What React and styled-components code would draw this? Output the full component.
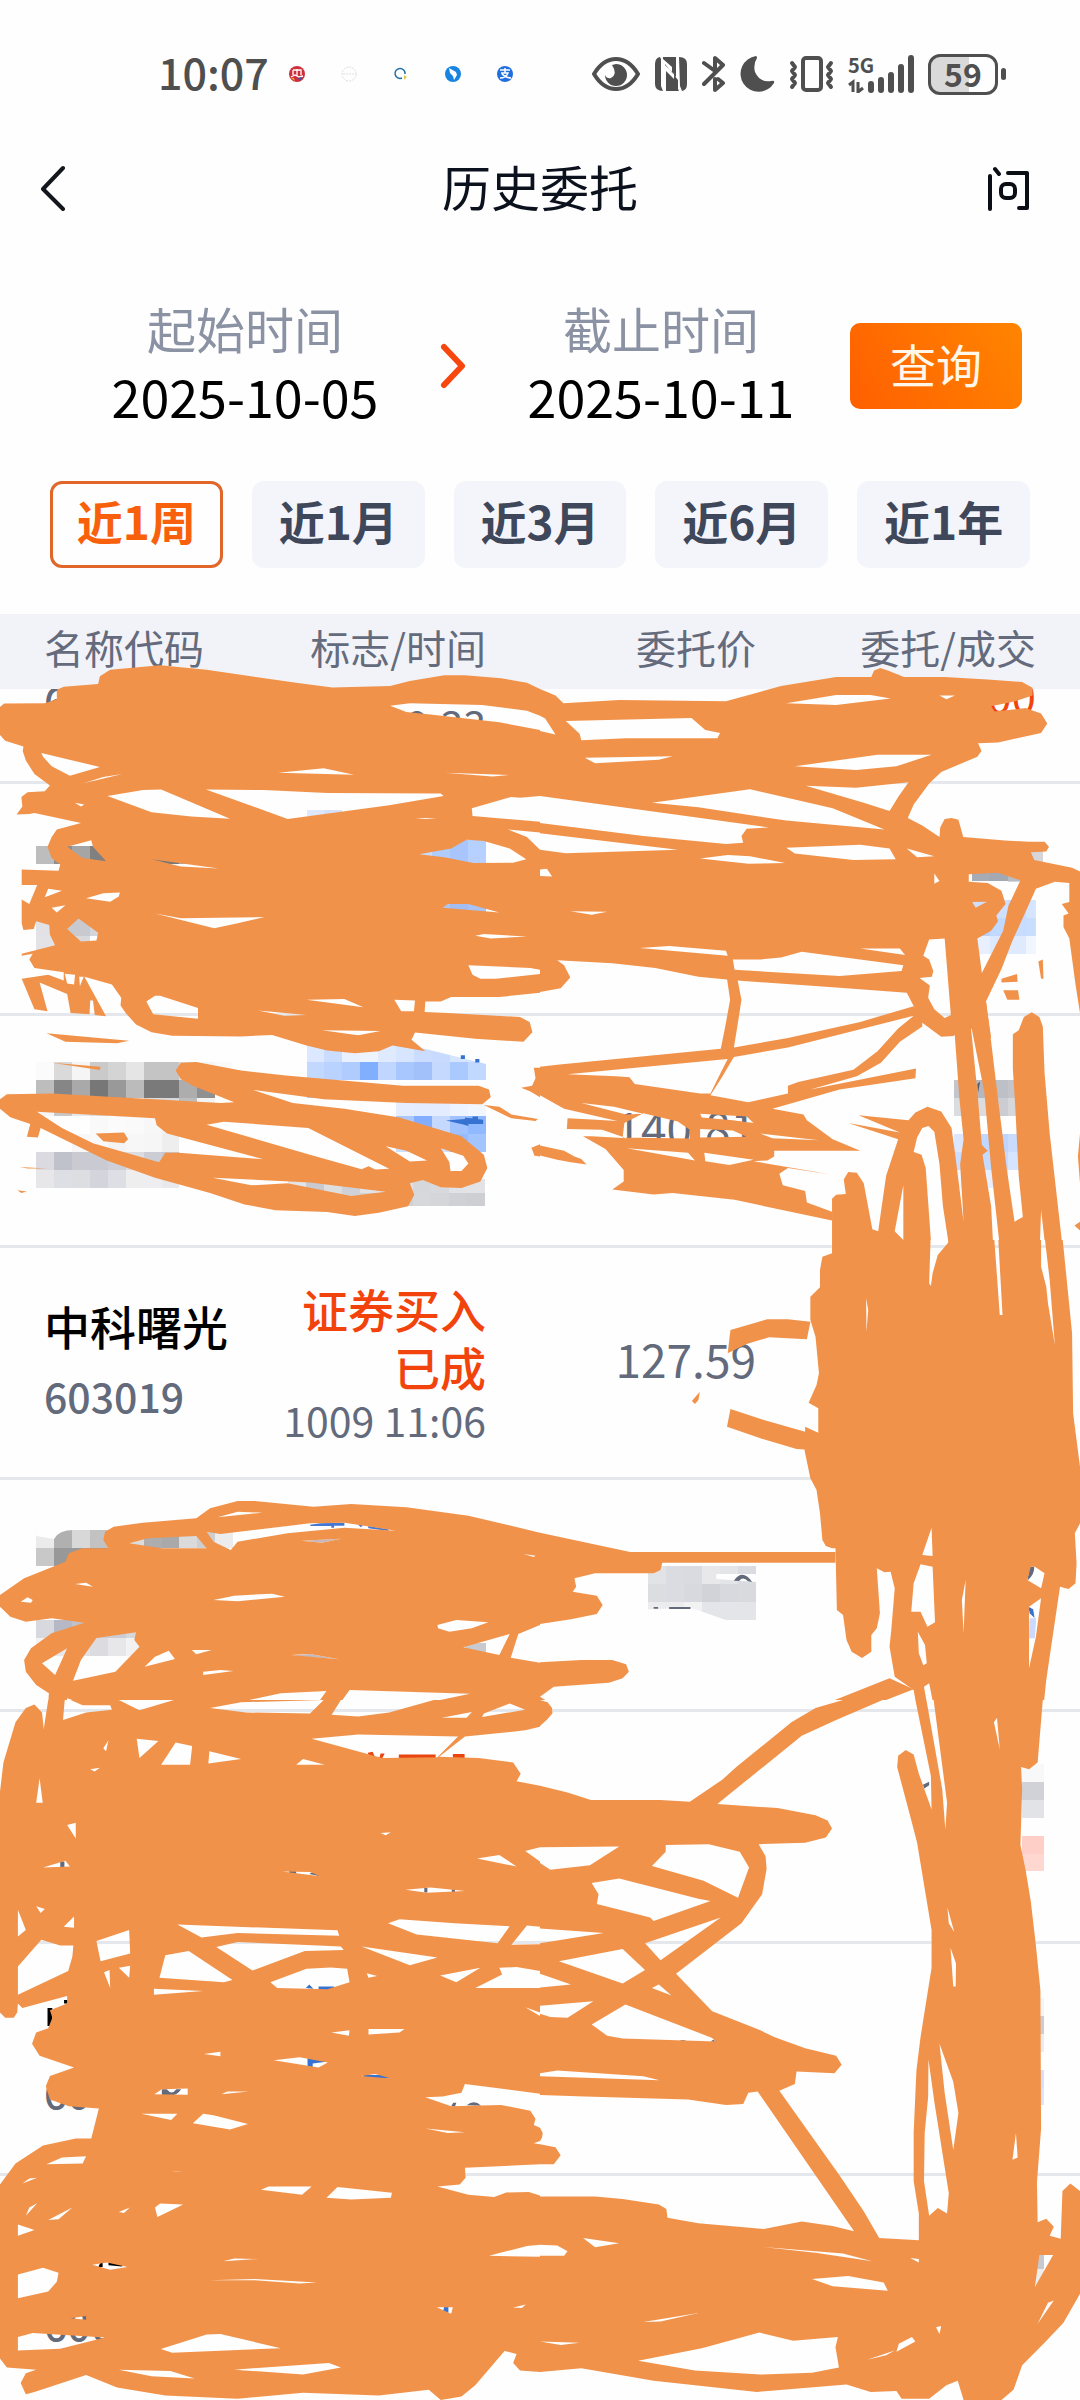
import React from "react";
import styled, { createGlobalStyle } from "styled-components";

const INK = "#f1924a";

const GlobalStyle = createGlobalStyle`
  * { box-sizing: border-box; }
  body {
    margin: 0;
    background: #fefefe;
    font-family: "Noto Sans CJK SC", "Noto Sans", sans-serif;
  }
  button { font-family: inherit; border: 0; padding: 0; background: none; cursor: pointer; }
`;

const Page = styled.main`
  position: relative;
  display: flex;
  flex-direction: column;
  height: 100vh;
  overflow: hidden;
  background: #fefefe;
`;

const StatusBar = styled.div`
  display: flex;
  align-items: center;
  flex: none;
  height: 148px;
  padding: 0 74px 0 158px;
  color: #4f4f4f;
`;

const Clock = styled.time`
  width: 131px;
  font-size: 43px;
  font-weight: 500;
  line-height: 60px;
  padding-bottom: 6px;
`;

const AppDots = styled.div`
  display: flex;
  gap: 36px;
  flex: 1;
`;

const SystemIcons = styled.div`
  display: flex;
  align-items: center;
  gap: 14px;
`;

const Signal = styled.div`
  display: grid;
  position: relative;
  width: 66px;
  height: 38px;
`;

const NetworkLabel = styled.span`
  position: absolute;
  left: 0;
  top: 0;
  font: 700 20px/20px "Noto Sans CJK SC", sans-serif;
`;

const Battery = styled.div`
  display: flex;
  align-items: center;
  gap: 3px;
  &::after {
    content: "";
    width: 5px;
    height: 12px;
    border-radius: 3px;
    background: #4f4f4f;
  }
`;

const BatteryBody = styled.span`
  width: 70px;
  height: 41px;
  border: 3px solid #4f4f4f;
  border-radius: 12px;
  background: linear-gradient(90deg, #d9d9d9 59%, #fefefe 59%);
  text-align: center;
  font-size: 32px;
  font-weight: 700;
  line-height: 32px;
`;

const NavBar = styled.header`
  display: flex;
  align-items: center;
  justify-content: space-between;
  flex: none;
  height: 80px;
  padding: 0 38px;
`;

const Title = styled.h1`
  margin: 0;
  font-size: 49px;
  font-weight: 400;
  line-height: 76px;
  padding-bottom: 4px;
  color: #0b111d;
`;

const IconButton = styled.button`
  display: flex;
  width: 54px;
  height: 46px;
`;

const DateForm = styled.section`
  display: flex;
  align-items: center;
  flex: none;
  padding: 66px 58px 43px 56px;
`;

const DateButton = styled.button`
  display: flex;
  flex: 1;
  flex-direction: column;
  align-items: center;
  padding-bottom: 8px;
`;

const DateLabel = styled.span`
  font-size: 49px;
  line-height: 68px;
  color: #8a92a3;
`;

const DateValue = styled.span`
  font-size: 52px;
  line-height: 68px;
  color: #000;
`;

const QueryButton = styled.button`
  width: 172px;
  height: 86px;
  border-radius: 10px;
  background: linear-gradient(60deg, #ff5f00, #ff8500);
  color: #fff8ea;
  font-size: 46px;
  line-height: 80px;
  padding-bottom: 6px;
`;

const RangeBar = styled.nav`
  display: flex;
  gap: 29px;
  flex: none;
  padding: 0 50px 46px;
`;

const RangeButton = styled.button`
  flex: 1;
  height: 87px;
  padding-bottom: 10px;
  border: 3px solid ${(p) => (p.$active ? "#e0662a" : "#f4f5fa")};
  border-radius: 12px;
  background: ${(p) => (p.$active ? "#fefefe" : "#f4f5fa")};
  color: ${(p) => (p.$active ? "#f9600b" : "#3f475a")};
  font-size: 46px;
  font-weight: 700;
  line-height: 70px;
`;

const OrderTable = styled.table`
  width: 100%;
  table-layout: fixed;
  border-collapse: collapse;
`;

const Head = styled.th`
  width: ${(p) => p.$width};
  height: 75px;
  padding: ${(p) => (p.$edge === "left" ? "0 0 9px 44px" : p.$edge === "right" ? "0 44px 9px 0" : "0 0 9px")};
  background: #f2f3f8;
  color: #646b7d;
  font-size: 40px;
  font-weight: 400;
  line-height: 62px;
  text-align: ${(p) => (p.$edge === "left" ? "left" : "right")};
`;

const Cell = styled.td`
  padding: ${(p) => (p.$edge === "left" ? "0 0 0 44px" : p.$edge === "right" ? "0 44px 0 0" : "0")};
  border-bottom: 3px solid #e4e8ec;
  text-align: ${(p) => (p.$edge === "left" ? "left" : "right")};
`;

const CellWindow = styled.div`
  display: flex;
  flex-direction: column;
  justify-content: flex-end;
  height: ${(p) => (p.$cut ? "92px" : "229px")};
  overflow: hidden;
`;

const CellBody = styled.div`
  display: flex;
  flex: none;
  flex-direction: column;
  justify-content: center;
  height: 229px;
`;

const StockName = styled.span`
  height: 70px;
  font-size: 46px;
  font-weight: 500;
  line-height: 66px;
  color: #000;
`;

const StockCode = styled.span`
  height: 72px;
  font-size: 41px;
  font-weight: 500;
  line-height: 66px;
  color: #626a7c;
`;

const State = styled.span`
  height: 58px;
  font-size: 46px;
  font-weight: 500;
  line-height: 60px;
  color: #f2430c;
`;

const Time = styled.span`
  height: 54px;
  font-size: 41px;
  line-height: 50px;
  color: #626a7c;
`;

const Price = styled.span`
  height: 70px;
  font-size: 46px;
  line-height: 60px;
  color: #626a7c;
`;

const Amount = styled.span`
  height: 112px;
  padding-top: 56px;
  font-size: 44px;
  line-height: 54px;
  color: #f2430c;
`;

const InkLayer = styled.svg`
  position: absolute;
  left: 0;
  top: 0;
  width: 100%;
  height: 2400px;
  pointer-events: none;
`;

/* Each shape is a closed outline; the shapes after the first in a list are gaps in it. */
const outline = (list) => list.map((s) => `M${s}Z`).join("");

const topLeft = [
  "285 115 290 95 320 78 465 66 600 78 860 112 965 124 1133 120 1190 107 1290 92 1350 92 1455 100 1530 112 1568 128 1568 408 1510 412 1485 410 1370 440 1372 460 1568 475 1568 503 1475 495 1530 515 1568 548 1568 862 1540 857 1360 850 1372 875 1395 885 1440 885 1568 873 1568 922 1450 933 1310 933 1280 945 1235 945 1233 972 1300 975 1510 985 1538 998 1546 1025 1520 1050 1380 1042 1205 1026 1195 1045 1235 1075 1140 1060 1100 1075 1030 1080 950 1073 890 1060 790 1032 700 1036 500 1034 440 1025 395 1005 365 975 350 955 352 935 325 900 245 880 308 983 275 980 270 942 262 942 260 978 205 975 195 925 115 895 138 970 100 965 63 885 140 875 185 890 185 868 100 857 85 835 95 820 63 825 63 820 160 798 145 770 143 745 105 735 98 755 68 758 63 740 63 678 85 690 108 640 63 640 63 600 170 603 175 587 150 570 138 540 150 515 165 495 235 478 100 452 85 455 48 456 65 435 62 410 80 398 130 395 145 380 100 350 75 315 66 290 68 278 15 263 0 248 0 175 12 166 130 165 165 155 165 130 185 122",
  "1133 172 1190 165 1400 170 1530 185 1568 198 1568 235 1450 215 1250 195 1180 188",
  "120 295 290 332 203 355 150 330 125 305", "240 375 300 358 355 350",
  "312 408 415 392 468 391 668 467 555 461 440 450",
  "598 391 765 392 950 400 1280 401 1288 408 1130 432 835 468 750 440",
  "808 347 940 335 1028 352", "1292 347 1478 353 1430 357", "217 425 245 430 235 435",
  "195 540 265 523 270 540 308 578 240 570", "440 573 635 597 525 592", "1207 468 1235 465 1268 468",
  "1217 560 1310 545 1355 522 1405 525 1480 545 1528 573 1490 582 1375 583 1290 568",
  "140 650 180 655 130 672", "250 675 300 662 348 660 345 670 320 684", "150 700 190 693 165 712",
  "450 715 525 727 768 724 690 740 622 753", "195 755 228 728 285 765 280 785 235 788",
  "1285 700 1300 690 1360 690 1450 712", "1380 773 1405 768 1530 775 1425 780",
  "188 872 195 898 215 900 218 875", "230 880 243 880 232 905",
  "425 945 450 930 465 930 575 962 575 990 445 978", "750 968 890 980 825 982",
  "890 940 1000 938 1055 960", "1145 940 1205 942 1202 970 1165 970", "935 1020 1105 1022 1040 1033",
];

const loopLeft = [
  "0 1200 20 1187 150 1185 640 1210 680 1208 560 1165 525 1147 510 1125 525 1105 570 1103 700 1125 830 1138 1170 1165 1390 1165 1420 1175 1425 1195 1400 1213 1180 1210 940 1200 735 1176 850 1210 1000 1225 1160 1248 1340 1297 1405 1345 1415 1380 1395 1415 1340 1432 1280 1430 1228 1411 1190 1420 1203 1450 1185 1480 1100 1497 1030 1505 950 1495 800 1490 710 1475 610 1445 450 1405 310 1360 118 1275 110 1300 78 1298 88 1265 30 1247 0 1225",
  "107 1233 450 1250 455 1268 485 1290 765 1357 520 1340 480 1340 462 1365 270 1315 180 1275",
  "600 1267 650 1259 895 1275 1130 1382 1090 1384 1070 1375 1050 1383 900 1345",
  "1120 1323 1180 1335 1240 1360 1190 1363", "1280 1328 1345 1348 1360 1368 1340 1388 1308 1388 1305 1365",
  "617 1405 900 1418 1120 1442 1020 1453 835 1420 730 1425",
];

const bitsLeft = [
  "135 1028 375 1047 340 1054 190 1050", "150 1105 292 1115 290 1124",
  "278 1290 360 1287 372 1305 360 1315 300 1310",
  "1405 1215 1450 1220 1485 1240 1562 1252 1555 1257 1485 1250",
  "1513 1170 1545 1165 1555 1145 1550 1118 1568 1118 1568 1195 1540 1180", "1543 1327 1568 1318 1568 1350 1552 1348",
  "57 1377 137 1381 80 1381", "50 1438 78 1441 62 1445",
];

const topRight = [
  "0 128 45 145 68 165 230 157 540 160 630 138 700 120 860 97 962 97 970 80 988 73 1010 80 1057 97 1175 97 1300 103 1400 110 1430 125 1430 145 1380 160 1310 173 1320 187 1410 178 1455 192 1473 218 1455 243 1330 268 1272 270 1282 290 1270 305 1165 345 1130 375 1085 430 1068 465 1110 485 1160 515 1162 490 1175 468 1195 465 1215 470 1229 515 1350 524 1420 527 1465 527 1478 540 1470 553 1425 555 1435 575 1545 595 1568 605 1568 975 1555 900 1537 780 1520 750 1520 720 1535 715 1515 690 1537 685 1537 635 1495 632 1440 650 1430 670 1395 740 1370 790 1340 860 1295 945 1310 1040 1240 1010 1200 1035 1165 1037 1110 1000 1065 922 860 908 573 890 460 880 335 857 210 845 50 837 70 850 88 882 60 910 0 920",
  "1175 780 1193 980 1175 988 1145 965 1127 935 1132 903 1102 883 1138 880 1142 865 1130 835 1113 825 1130 783",
  "0 198 15 205 45 247 0 238", "75 212 440 204 480 235 523 243 515 257 250 257 120 262 115 245",
  "715 165 860 144 960 144 1018 153 860 170", "1160 145 1205 145 1180 155", "130 308 385 304 345 313 160 322",
  "740 330 980 300 1137 300 1035 330 918 340", "772 381 918 386 1070 372 1040 410 1015 447 940 425",
  "325 425 610 390 850 440 1000 495 715 472 460 437",
  "0 408 450 463 665 490 600 493 585 512 590 530 540 533 300 512 0 478", "0 505 400 548 75 557 0 548",
  "465 571 545 562 610 565 712 583 605 585", "715 543 930 535 1015 545 1033 573 910 575 740 558",
  "1065 545 1145 565 1095 568", "290 805 375 800 540 812 545 825", "560 835 640 835 700 830 760 815 1055 850 1050 865 870 878 565 862",
  "930 806 1045 806 1060 823", "0 600 20 598 35 618 0 617", "88 709 195 710 150 718", "1145 610 1160 630 1145 637",
  "1270 780 1310 760 1330 735 1325 720 1352 690 1340 655 1300 635 1245 632 1245 612 1330 608 1395 628 1360 695 1345 760 1283 870",
  "1255 685 1298 684 1265 700",
];

const sweepRight = [
  "0 1115 50 1110 525 1068 540 1000 552 940 543 885 573 885 585 940 573 1010 563 1065 720 1040 930 998 1085 957 1110 985 1110 1010 1045 1050 990 1105 920 1140 785 1175 1092 1120 1090 1145 870 1175 675 1225 765 1240 775 1255 850 1305 930 1335 680 1335 680 1350 660 1360 620 1362 845 1397 720 1380 695 1395 705 1425 770 1440 775 1470 850 1495 848 1517 565 1463 385 1445 330 1449 210 1436 243 1415 243 1385 190 1330 125 1297 150 1297 252 1302 180 1280 78 1278 80 1250 150 1253 225 1257 70 1225 0 1190",
  "80 1135 545 1095 525 1130 495 1185 465 1185 275 1160 260 1143 220 1140",
  "563 1090 720 1065 1085 982 1040 1015 980 1075 910 1123 750 1155 720 1165 720 1185 605 1208 495 1190 530 1140",
  "252 1328 430 1340 450 1360", "477 1340 620 1358 550 1372 480 1362", "675 1302 810 1307 640 1290",
  "120 1210 215 1220 300 1238 250 1240", "245 1262 300 1237 400 1258 435 1280 435 1303 240 1300", "465 1238 600 1245 620 1262 560 1255 470 1248",
  "465 1278 560 1282 600 1298 465 1300",
];

const barsRight = [
  "1200 980 1295 945 1310 1050 1330 1200 1355 1380 1378 1520 1402 1508 1390 1400 1380 1220 1373 1120 1373 1030 1390 1020 1405 985 1428 973 1450 985 1460 1010 1465 1130 1480 1290 1515 1568 848 1568 848 1460 860 1450 888 1448 882 1410 895 1390 920 1392 940 1420 965 1540 982 1545 1005 1400 1040 1305 895 1262 1045 1287 925 1242 1070 1255 1090 1235 1125 1220 1165 1232 1195 1275 1205 1340 1230 1520 1220 1370 1230 1305 1218 1200",
  "1250 1000 1270 1180 1283 1320 1300 1335 1285 1345 1310 1480 1315 1568 1333 1568 1310 1380 1290 1180",
  "1085 1338 1095 1300 1110 1275 1128 1270 1145 1285 1160 1370 1170 1480 1185 1568 1135 1568 1120 1380 1108 1345",
  "1055 1425 1030 1545 1055 1568", "1455 1490 1452 1568 1465 1568",
];

const bitsRight = [
  "1340 885 1385 873 1387 893 1340 895", "1345 915 1388 915 1392 940 1357 940", "1447 840 1460 835 1462 885 1455 885",
  "1568 1290 1562 1350 1568 1420", "1552 1530 1568 1520 1568 1543",
  "0 1321 70 1335 100 1350 120 1356 135 1371 90 1365 50 1358 0 1347",
];

const midLeft = [
  "300 930 305 905 330 890 415 878 570 865 610 835 690 813 740 813 910 830 1020 822 1180 832 1360 857 1568 908 1568 1185 1505 1212 1483 1283 1568 1298 1568 1500 45 1500 60 1450 75 1430 95 1424 122 1440 126 1500 135 1500 142 1390 105 1365 75 1325 70 1290 90 1255 150 1210 245 1178 150 1165 75 1175 30 1160 0 1130 0 1095 70 1045 190 995 200 970 240 955 315 955",
  "632 862 690 845 762 848", "600 905 640 912 900 880 1000 878 1150 902 1000 893 835 910 690 935 670 960 620 935",
  "375 940 430 925 570 918 600 955 470 955", "60 1115 80 1102 95 1110 90 1118", "218 1062 250 1058 270 1070",
  "620 1110 680 1097 790 1091 827 1100 690 1114", "1270 1185 1325 1170 1418 1177 1370 1195 1305 1205 1272 1195",
  "1345 1252 1480 1212 1450 1275", "280 1224 395 1207 390 1230 405 1250 335 1325 212 1352 235 1290",
  "122 1300 195 1255 160 1335", "420 1310 450 1280 490 1262 508 1287", "557 1260 615 1260 570 1273",
  "590 1325 640 1320 678 1323 590 1335", "845 1275 900 1272 985 1288", "610 1435 815 1390 948 1383 900 1452 710 1450",
  "1015 1380 1365 1391 1150 1438 1050 1458 963 1455", "195 1405 265 1428 320 1425 325 1440 185 1470",
  "375 1420 495 1411 405 1442", "1520 972 1555 977 1550 981", "875 932 990 926 935 938",
];

const midRight = [
  "848 0 848 70 820 80 813 120 813 172 785 200 785 270 800 320 810 430 803 465 780 518 808 535 808 608 770 590 768 660 785 745 803 780 813 850 820 930 830 948 848 955 858 955 862 1140 880 1155 890 1230 905 1265 935 1284 962 1265 962 1215 978 1195 987 1150 978 1015 1000 1027 1018 1025 1030 1075 1020 1200 1015 1250 1030 1340 1085 1380 1105 1500 1455 1500 1470 1350 1510 1070 1535 1077 1555 1060 1558 1000 1553 910 1568 880 1568 710 1548 550 1545 310 1515 0",
  "965 0 1010 0 980 5", "1020 0 1055 0 1055 28", "1135 0 1185 0 1185 38 1155 75 1140 130 1135 168 1130 160", "947 205 953 240 948 305",
  "1318 10 1330 15 1343 255 1335 255", "1455 0 1463 0 1480 150 1495 345 1475 220 1470 170 1455 110",
  "1110 975 1137 893 1140 978", "1140 1010 1105 1003 1085 1060 1078 1145 1105 1145 1125 1190 1147 1177",
  "1097 1205 1118 1245 1123 1300 1113 1306 1100 1270", "1236 1050 1230 1210 1225 1110",
  "1415 1050 1425 1010 1437 1010 1465 1030 1455 1075", "1420 1130 1455 1105 1440 1220 1420 1315",
  "1130 1360 1115 1370 1137 1500 1157 1500",
];

const midStrokes = [
  "0 908 262 966 858 966 858 998 355 998 350 1020 330 1030 160 1030 100 1045 105 1070 95 1085 165 1097 182 1125 165 1152 90 1168 0 1182",
  "0 1297 120 1290 210 1290 250 1303 258 1325 240 1345 200 1358 40 1370 0 1400 22 1414 35 1440 0 1480",
  "553 300 660 268 720 268 785 275 775 328 665 322 600 342 545 370",
  "553 537 650 570 770 605 808 612 800 660 745 657 640 625 543 590",
  "441 513 464 485 460 510 450 522", "705 1500 795 1435 1015 1345 1085 1378 830 1480 795 1500",
];

const lowLeft = [
  "0 205 10 140 45 50 75 18 100 10 122 28 127 65 140 0 188 0 183 45 250 28 325 22 320 12 240 12 205 0 1568 0 1568 60 1525 68 1350 82 1275 127 1390 130 1490 140 1512 165 1500 182 1568 192 1568 330 1525 338 1568 362 1568 508 1530 505 1485 548 1568 547 1568 607 1500 598 1450 600 1458 615 1380 645 1568 645 1568 700 1525 688 1568 708 1568 882 1350 860 1340 880 1285 888 1235 890 1310 910 1455 907 1540 920 1555 938 1550 952 1568 958 1568 988 1550 993 1568 995 1568 1040 1350 1048 1352 1070 1335 1085 1270 1090 1360 1108 1435 1113 1470 1103 1535 1102 1568 1110 1568 1220 1530 1223 1420 1245 1568 1247 1568 1505 1510 1502 1490 1485 1500 1465 1465 1458 1380 1535 1340 1560 1280 1568 1245 1545 1100 1558 880 1552 690 1565 480 1558 340 1540 250 1512 100 1550 75 1555 60 1530 75 1508 105 1500 20 1495 0 1475 0 1085 45 1038 125 998 220 982 265 982 287 915 200 910 145 895 133 865 145 842 215 823 115 797 93 770 105 745 140 735 152 712 145 695 195 680 195 663 65 690 52 680 50 700 40 712 15 712 0 700",
  "115 175 105 230 124 230", "345 0 505 0 405 23", "610 18 700 5 940 0 900 30 715 28", "963 33 990 0 1260 0 1130 28 1040 37",
  "1283 40 1370 27 1355 40", "1405 30 1480 8 1525 22 1400 38", "300 108 315 90 308 115", "262 155 290 152 275 160",
  "397 87 460 92 405 130", "510 95 558 103 552 145 468 145", "608 115 700 132 605 142", "905 87 1040 77 1330 82 1270 128 1110 130",
  "860 145 880 132 943 145", "195 280 220 275 220 310", "125 375 190 360 203 373", "955 306 1005 314", "1105 298 1135 296 1120 303",
  "1385 355 1450 347 1500 373", "820 384 900 385 930 395", "1178 425 1250 420 1350 428 1240 432", "105 462 130 468 118 477",
  "52 470 75 515 52 530", "120 537 175 550 213 550 210 575 198 607 52 660 52 597", "215 485 215 510 185 508",
  "280 540 375 515 378 568 292 585", "515 503 980 516 985 528 690 522 585 532", "1127 500 1160 491 1320 500 1480 507 1445 545 1210 525",
  "480 572 548 562 675 627 650 632 463 622", "628 553 690 542 990 552 998 560 885 562 733 606", "1050 552 1270 577 1190 594",
  "785 632 890 602 960 599 1008 602 1015 632 950 648 805 645", "1278 617 1395 600 1325 632", "447 647 590 652 447 660",
  "302 610 318 605 320 645", "345 600 378 595 375 622", "1065 612 1095 618 1070 622", "962 745 1015 740 1013 752",
  "1070 737 1175 737 1160 745 1070 749", "592 793 640 788 640 798", "795 807 870 800 952 812 925 823", "1048 842 1090 838 1135 848",
  "448 883 470 872 545 870 545 884", "643 883 660 877 722 877", "410 927 515 927 497 941", "560 948 590 927 620 930 720 950 668 962",
  "1235 960 1350 968 1300 970", "135 1040 180 1025 250 1022 240 1038", "65 1083 85 1072 108 1070", "498 1057 565 1052",
  "758 1097 780 1090 905 1090 877 1108", "948 1115 980 1091 1138 1104 1135 1115 1020 1119", "450 1137 465 1128 532 1130 457 1158",
  "345 1147 377 1137 360 1149", "75 1155 85 1137 108 1127", "140 1165 210 1137 170 1163", "52 1175 100 1187 52 1200",
  "52 1287 125 1272 170 1283 165 1303 140 1325 52 1340", "268 1265 310 1260 370 1270 320 1276", "648 1257 680 1251 750 1252",
  "608 1300 740 1297 920 1305 870 1307 740 1300", "1268 1360 1315 1360 1310 1375", "52 1427 95 1418 305 1428 175 1453 52 1457",
  "467 1454 600 1421 640 1420 815 1452 500 1462", "345 1500 495 1503 565 1520 440 1515", "680 1500 955 1485 990 1495 880 1511",
  "205 1385 250 1380 250 1388", "1490 1361 1527 1354 1515 1362",
];

const lowRight = [
  "0 192 80 207 148 224 350 224 435 228 530 178 570 150 730 50 800 18 880 0 995 0 860 45 760 80 600 180 515 233 690 242 800 258 835 270 848 288 830 308 770 320 635 323 655 350 658 378 645 435 585 500 395 613 500 697 640 740 680 755 770 780 860 797 876 817 855 836 745 832 740 860 695 875 870 1065 940 1145 985 1205 1100 1210 1100 1150 1085 1078 1085 970 1093 830 1105 755 1137 600 1137 515 1095 320 1080 275 1037 150 1040 125 1062 112 1085 122 1100 165 1137 245 1135 170 1090 0 1460 0 1445 140 1420 155 1397 150 1400 200 1395 325 1410 380 1425 450 1440 550 1453 650 1455 960 1443 1080 1445 1170 1470 1162 1492 1180 1480 1200 1512 1207 1517 1100 1540 1083 1568 1100 1568 1330 1520 1395 1465 1440 1400 1490 1375 1545 1340 1568 1230 1568 1213 1525 1180 1535 1130 1565 1050 1565 1035 1548 960 1550 890 1533 630 1550 330 1525 120 1497 0 1505",
  "0 885 130 888 430 895 540 907 590 905 605 880 632 877 912 1190 850 1178 760 1168 650 1185 460 1172 370 1160 367 1140 345 1130 240 1118 160 1112 0 1112 0 1040 40 1040 60 1020 45 1002 0 995",
  "285 1480 470 1452 637 1417 735 1435 865 1427 858 1450 868 1495 790 1507 640 1511 450 1502",
  "0 330 230 328 145 370 30 380 0 365", "365 325 490 323 580 340 607 375 575 443 475 405 325 372 365 340",
  "150 410 230 400 460 445 495 450 330 495 320 487 165 457 170 435", "0 512 185 522 0 545",
  "305 545 525 487 350 583", "55 585 240 558 305 605 240 635", "0 613 90 637 0 644", "0 685 155 675 80 712 30 710 0 703",
  "150 727 248 682 500 757 510 765 240 758 195 752", "325 645 345 637 382 662", "0 836 50 830 300 843 347 852 0 843",
  "1122 0 1143 0 1160 100 1182 230 1177 290 1168 200", "1318 50 1327 40 1335 110", "1183 465 1203 520 1187 500",
  "1192 555 1208 590 1207 642 1200 642", "1160 770 1200 855 1215 925 1200 1008 1175 880",
  "1128 805 1145 900 1187 1105 1182 1150 1155 1138 1130 1155 1115 1078 1117 970 1127 890", "1382 970 1387 1025 1372 1030",
  "647 1225 880 1240 965 1257 800 1238", "790 1297 895 1290 998 1305 1010 1323 850 1313", "125 1205 230 1217 160 1226",
  "0 1220 50 1222 80 1235 70 1245 0 1245", "300 1393 460 1373 350 1392", "0 1437 115 1440 60 1445",
  "1450 1243 1490 1243 1437 1315", "1445 1397 1475 1350 1492 1345", "950 1478 1030 1457 1005 1468",
  "1042 1442 1080 1427 1090 1437 1035 1460", "1150 1405 1165 1402 1160 1420", "1075 1250 1100 1252 1100 1260",
];

const bitsLowRight = ["0 0 22 5 35 18 36 30 20 44 0 58", "0 958 8 970 6 980 0 988"];

function Mosaic({ x, y, w = 52, h = 47, rows }) {
  return (
    <g shapeRendering="crispEdges">
      {rows.map((row, r) =>
        row.split(" ").map((c, i) =>
          c === "-" ? null : <rect key={`${r}-${i}`} x={x + i * w} y={y + r * h} width={w} height={h} fill={`#${c}`} />
        )
      )}
    </g>
  );
}

function Panel({ x, y, h, box, shapes, bits, children }) {
  return (
    <svg x={x} y={y} width="540" height={h} viewBox={box} preserveAspectRatio="none">
      {children}
      {shapes.map((s, i) => (
        <path key={i} d={outline(s)} fill={INK} fillRule="evenodd" />
      ))}
      {bits && <path d={outline(bits)} fill={INK} />}
    </svg>
  );
}

function Scribble() {
  return (
    <InkLayer viewBox="0 0 1080 2400" preserveAspectRatio="none" aria-hidden="true">
      <Panel x="0" y="640" h="600" box="0 0 1568 1568" shapes={[topLeft, loopLeft]} bits={bitsLeft}>
        <Mosaic x={105} y={538} rows={["bdbdbd 8f8f8f a5a5a5 808080 909090 aaaaaa 7d7d7d 777777 aaaaaa"]} />
        <Mosaic x={105} y={727} rows={["e2e2e6 c8cad0 c8cad0 d4d5da", "e3e3e7 e0e0e5 d8d9dd"]} />
        <Mosaic x={890} y={444} h={16} rows={["dde8ff d4e1fb"]} />
        <Mosaic x={1202} y={522} rows={["c9dafb b0ccfd a8c6fd b6d1ff", "a9c5fa a5c4fc a9c6fb b7d0ff"]} />
        <Mosaic x={1254} y={680} rows={["aec5f3 a4bdf1 a9c2f3"]} />
        <Mosaic
          x={105}
          y={1103}
          rows={[
            "fbfbfb dadada f5f5f5 cacaca d4d4d4 e5e5e5 c4c4c4 c4c4c4 dcdcdc f5f5f5 fafafa",
            "bdbdbd 868686 a9a9a9 777777 999999 bbbbbb 7a7a7a 7a7a7a adadad 909090 -",
            "f6f6f6 c8c8c8 e8e8e8 dddddd eeeeee f5f5f5 dddddd d9d9d9 bcbcbc f3f3f3 -",
            "- - - f9f9f9 fbfbfb fafafa f7f7f7 f2f2f4 - - -",
            "- - f7f7f7 f9f9f9 f4f4f4 f7f7f7 f6f6f6 eeeeef - - -",
            "dadae0 bfc2cb cacbd2 c9cad2 cfd0d7 dcdce1 cccdd4 c7c8ce - - -",
            "e7e7ea dedfe4 dddee2 d4d5dc dedfe4 eeeeee eeeef1 e9e9ec - - -",
          ]}
        />
        <Mosaic
          x={890}
          y={1056}
          rows={[
            "dce8ff cbddff e9f0ff eef4ff e0eaff d8e5ff cadcff c8dbff d6e5ff d5e4ff",
            "c2d8ff b9d2ff b0ccff 80afff c0d6ff a9c7ff a2c1fb c5d9ff aac9ff c1d8ff",
            "b7c9ef - - - - - - - - -",
            "- - - - - e5edff e4edff e4ecff edf3ff f2f7ff",
            "- - - - - aac8ff 83aeff c5d9ff a0c2ff 91b9ff",
            "- - - - - d0e0ff a9c5ff d4e2ff 97bbff a2c4ff",
          ]}
        />
        <path d="M1150 1050L1412 1108V1050Z" fill="#fefefe" />
        <Mosaic x={836} y={1409} h={35} rows={["e4e4e7 c8cad0 dededf d0d1d6 e2e2e5 e2e2e5 e1e1e5 d6d7db d8d9dd e1e2e5 e3e3e6", "eeeeef e9e9ec dcdce0 d0d1d5 d0d1d5 d0d1d5 d0d1d5 d7d8dc d5d6da cfd1d6 cdcfd3"]} />
        <path d="M1295 1256L1350 1252 1350 1248 1403 1254V1265H1360V1270L1345 1266ZM1338 1085h12v10h-12zM1380 1095h12v9h-12zM1372 1245h16v8h-16z" fill="#3672d2" />
      </Panel>
      <Panel x="540" y="640" h="600" box="0 0 1568 1568" shapes={[topRight, sweepRight, barsRight]} bits={bitsRight}>
        <Mosaic x={1358} y={538} rows={["c9cad0 d5d5da", "d5d6da c9cbd0"]} />
        <Mosaic x={1254} y={606} h={25} rows={["a7abb6 a4a8b3 b9bcc4 c7c9d0"]} />
        <Mosaic x={1254} y={679} rows={["cfdefa cfdfff cadcff d6e5ff", "b9d0fa c1d8ff c8dcff c9deff", "e8f0ff dce9ff dfeaff f0f6ff"]} />
        <Mosaic x={1202} y={1150} rows={["c4c5cb b4b7c0 bdc0c7 c3c5cb", "dbdce0 dbdce0 cccdd3 d6d7db", "- - - -", "dce7ff c0d7ff bdd5ff c9dcff", "cbdcff c5daff c5daff d5e4ff", "f2f6ff e8f0ff e6efff -"]} />
        <path d="M1440 850V660Q1450 638 1478 638T1512 670L1525 780 1540 850Z" fill="#fefefe" />
        <path d="M1310 552q20-6 40 6l-4 6zM1422 550l12 26-8-4zM1270 1160l8-6-6 30z" fill="#55596a" />
      </Panel>
      <Panel x="0" y="1240" h="460" box="0 30 1568 1380" shapes={[midLeft]}>
        <Mosaic x={105} y={900} h={54} rows={["ebebeb b0b0b0 d8d8d8 c2c2c2 cccccc dcdcdc adadad a9a9a9 dadada cecece ececec", "c8c8c8 989898 999999 888888 - - - - - - -"]} />
        <path d="M105 918V895H215V900Q170 900 157 927Z" fill="#fefefe" />
        <Mosaic x={105} y={1170} h={54} rows={["d8d9de b6b9c5 c0c1ca cccdd4 cccdd4 d6d7da", "f3f3f4 e8e8eb e2e2e5 dcdce0 e7e7e9 f2f2f2"]} />
        <Mosaic x={1350} y={1240} w={60} h={27} rows={["c9cacf"]} />
        <path d="M900 884l30-4 70-2v9h-30v6h-8v-5h-60zM1040 884l14 2-6 6zM1068 888l60 10v5l-58-8z" fill="#4677d3" />
        <path d="M875 932l115-6-55 12zM845 1277l55-5 85 16z" fill="#c5b9bd" />
      </Panel>
      <Panel x="540" y="1240" h="460" box="0 30 1568 1380" shapes={[midRight]} bits={midStrokes}>
        <Mosaic x={314} y={1008} h={54} rows={["e2e3e6 dbdce1 dadbe0 e8e8eb e4e5e8 dbdce1", "dcdde1 dbdce1 d8d9de d2d3d8 d8d9de d9dade", "ececee ececee f2f2f3 e4e5e8 e4e5e8 e4e5e9"]} />
        <path d="M512 1032H630V1056L512 1047ZM314 1138L440 1134 540 1170H314Z" fill="#fefefe" />
        <path d="M563 1052Q588 1015 616 1056L604 1054Q590 1038 578 1053ZM330 1131h13v5h-13zM375 1131h62v6h-62z" fill="#626a7c" />
        <path d="M1422 1010h13q2 22-20 42z" fill="#626a7c" />
        <path d="M1418 1130l14 8 4 26-14-14z" fill="#3672d2" />
        <path d="M1422 1165h19l-4 60h-17z" fill="#ccd9fb" />
      </Panel>
      <Panel x="0" y="1700" h="700" box="0 0 1568 1568" shapes={[lowLeft]}>
        <path d="M1068 118l14-2 8 14h-18zM1105 120h12l-8 12h-8zM1158 122h107v8h-107zM1315 121h34v9h-34z" fill="#e8450f" />
        <path d="M888 645l10-8 12 10zM925 642h45v8h-45zM893 802l60 8-45 4v8h-15zM1055 840h80v8h-80zM1290 1358h12v14h-16z" fill="#3672d2" />
        <path d="M138 690h14v40h-14zM186 672h10v8h-10zM290 1262l8-2v10h-12zM315 1259l40 6v4l-40-3z" fill="#000" />
        <path d="M175 362h12v13h-12zM1232 421h9v10h-9zM1312 424h9v7h-9zM840 382h20v8h-20zM898 390q15-10 32 5zM470 872h14q15 14 28 0h14q-18 22-56 12zM1310 910l6-8h9l-4 9zM1355 908q22-14 42 1zM240 1381h12v7h-12z" fill="#626a7c" />
      </Panel>
      <Panel x="540" y="1700" h="700" box="0 0 1568 1568" shapes={[lowRight]} bits={bitsLowRight}>
        <Mosaic x={1400} y={144} w={63} h={40} rows={["f8f8f8", "d1d2d7", "e2e3e7", "-", "fdcfc6", "fed8d0"]} />
        <Mosaic x={1445} y={668} w={18} h={40} rows={["f7f5f3", "cfccd0", "eeebea", "-", "d9dff8", "e1e4f8"]} />
        <Mosaic x={1437} y={1240} w={26} h={35} rows={["c8c9cf", "eeedec"]} />
        <path d="M1112 190l18-7v8l-14 7zM408 762h14v5h-14zM495 765l8-4 10 5z" fill="#626a7c" />
      </Panel>
    </InkLayer>
  );
}

function StatusIcons() {
  return (
    <>
      <svg width="48" height="34" viewBox="0 0 48 34" fill="none">
        <path d="M2 17Q11 2 24 2T46 17Q37 32 24 32T2 17Z" stroke="#4f4f4f" strokeWidth="4" strokeLinejoin="round" />
        <path d="M24 7A11 11 0 1 1 13 18Q15 22 19 21Q26 17 20 8Z" fill="#4f4f4f" />
      </svg>
      <svg width="34" height="36" viewBox="0 0 34 36" fill="#4f4f4f">
        <path d="M6 1Q1 2 1 8V28Q1 35 9 35L7 30V3ZM9 1H22V21L18 17V11L9 3ZM25 1Q33 1 33 8V28Q33 34 28 35L26 30ZM11 8L24 24V33L25 35H12V15L20 23V18L11 9Z" />
      </svg>
      <svg width="24" height="38" viewBox="0 0 24 38" fill="none" stroke="#4f4f4f" strokeWidth="4" strokeLinecap="round" strokeLinejoin="round">
        <path d="M2 29L21 10 13 3V16L2 8M13 24V35L21 28 16 24" />
      </svg>
      <svg width="35" height="38" viewBox="0 0 35 38">
        <path d="M16 1A18 18 0 1 0 34 28Q35 25 31 26Q20 28 15 17Q13 9 17 3Q17 1 16 1Z" fill="#4f4f4f" />
      </svg>
      <svg width="45" height="38" viewBox="0 0 45 38" fill="none" stroke="#4f4f4f" strokeWidth="4" strokeLinecap="round" strokeLinejoin="round">
        <rect x="14" y="3" width="18" height="32" rx="3" />
        <path d="M3 8l3 4-3 4 3 4-3 4 3 4-3 4M42 8l-3 4 3 4-3 4 3 4-3 4 3 4" strokeWidth="4" />
      </svg>
      <Signal>
        <NetworkLabel>5G</NetworkLabel>
        <svg width="66" height="38" viewBox="0 0 66 38" fill="none" stroke="#4f4f4f">
          <path d="M1 30L5 27V37M10 27V37L15 33" strokeWidth="3" />
          <path d="M23 29V35M33 25V35M43 20V35M53 12V35M63 3V35" strokeWidth="6" strokeLinecap="round" />
        </svg>
      </Signal>
    </>
  );
}

function AppIcons() {
  return (
    <AppDots>
      <svg width="16" height="16" viewBox="0 0 16 16">
        <circle cx="8" cy="8" r="8" fill="#cf2f3b" />
        <path d="M4 4V9M4 4H12V9M8 3V10M2 11L6 9 10 11 14 10" stroke="#fff" strokeWidth="1.3" fill="none" />
        <path d="M9 12l4-1-2 4z" fill="#3456b8" />
        <path d="M2 12l3 0 1 3z" fill="#f0a437" />
      </svg>
      <svg width="16" height="16" viewBox="0 0 16 16" fill="none" stroke="#dedede">
        <circle cx="8" cy="8" r="7" strokeDasharray="2 1" />
        <path d="M2 8H14" strokeDasharray="2 1" />
      </svg>
      <svg width="16" height="16" viewBox="0 0 16 16" fill="none">
        <path d="M9 12A5 5 0 1 1 12 8" stroke="#1e6fa5" strokeWidth="1.5" />
        <path d="M11 9l3 2-3 3z" fill="#d7c95b" />
      </svg>
      <svg width="16" height="16" viewBox="0 0 16 16">
        <circle cx="8" cy="8" r="8" fill="#1684e0" />
        <path d="M4 2L11 6 12 9 9 14 8 10 5 7Z" fill="#fff" />
      </svg>
      <svg width="16" height="16" viewBox="0 0 16 16">
        <circle cx="8" cy="8" r="8" fill="#1f6fdc" />
        <path d="M3 4H13M8 2V7M4 7H11Q9 12 3 12M5 8Q9 12 14 12" stroke="#fff" strokeWidth="1.5" fill="none" />
      </svg>
    </AppDots>
  );
}

const ranges = ["近1周", "近1月", "近3月", "近6月", "近1年"];

const orders = [
  { id: 1, cut: true, code: "600", time: "09:33", traded: "100" },
  { id: 2 },
  { id: 3, price: "140.81" },
  { id: 4, name: "中科曙光", code: "603019", state: ["证券买入", "已成"], time: "1009 11:06", price: "127.59" },
  { id: 5 },
  { id: 6 },
  { id: 7, code: "60" },
  { id: 8, code: "600" },
];

function OrderRow({ order }) {
  const { cut, name, code, state, time, price, traded } = order;
  return (
    <tr>
      <Cell $edge="left">
        <CellWindow $cut={cut}>
          <CellBody>
            {code && <StockName>{name}</StockName>}
            {code && <StockCode>{code}</StockCode>}
          </CellBody>
        </CellWindow>
      </Cell>
      <Cell>
        <CellWindow $cut={cut}>
          <CellBody>
            {time && <State>{state && state[0]}</State>}
            {time && <State>{state && state[1]}</State>}
            {time && <Time>{time}</Time>}
          </CellBody>
        </CellWindow>
      </Cell>
      <Cell>
        <CellWindow $cut={cut}>
          <CellBody>{price && <Price>{price}</Price>}</CellBody>
        </CellWindow>
      </Cell>
      <Cell $edge="right">
        <CellWindow $cut={cut}>
          <CellBody>{traded && <Amount>{traded}</Amount>}</CellBody>
        </CellWindow>
      </Cell>
    </tr>
  );
}

export default function App() {
  return (
    <Page>
      <GlobalStyle />
      <StatusBar>
        <Clock>10:07</Clock>
        <AppIcons />
        <SystemIcons>
          <StatusIcons />
          <Battery>
            <BatteryBody>59</BatteryBody>
          </Battery>
        </SystemIcons>
      </StatusBar>
      <NavBar>
        <IconButton aria-label="返回">
          <svg width="46" height="46" viewBox="0 0 46 46" fill="none" stroke="#13161c" strokeWidth="4" strokeLinecap="round" strokeLinejoin="round">
            <path d="M25 3L5 24 25 44" />
          </svg>
        </IconButton>
        <Title>历史委托</Title>
        <IconButton aria-label="问">
          <svg width="46" height="46" viewBox="0 0 46 46" fill="none" stroke="#0b0e14" strokeWidth="4" strokeLinecap="round" strokeLinejoin="round">
            <path d="M2 11V44M7 4L11 9M20 8H39V43H31" />
            <rect x="13" y="19" width="14" height="14" rx="5" />
          </svg>
        </IconButton>
      </NavBar>
      <DateForm>
        <DateButton>
          <DateLabel>起始时间</DateLabel>
          <DateValue>2025-10-05</DateValue>
        </DateButton>
        <svg width="38" height="50" viewBox="0 0 38 50" fill="none" stroke="#f8460f" strokeWidth="6" strokeLinecap="round" strokeLinejoin="round">
          <path d="M10 6L28 25 10 44" />
        </svg>
        <DateButton>
          <DateLabel>截止时间</DateLabel>
          <DateValue>2025-10-11</DateValue>
        </DateButton>
        <QueryButton>查询</QueryButton>
      </DateForm>
      <RangeBar>
        {ranges.map((r, i) => (
          <RangeButton key={r} $active={i === 0}>
            {r}
          </RangeButton>
        ))}
      </RangeBar>
      <OrderTable>
        <thead>
          <tr>
            <Head $width="22%" $edge="left">名称代码</Head>
            <Head $width="23%">标志/时间</Head>
            <Head $width="25%">委托价</Head>
            <Head $width="30%" $edge="right">委托/成交</Head>
          </tr>
        </thead>
        <tbody>
          {orders.map((o) => (
            <OrderRow key={o.id} order={o} />
          ))}
        </tbody>
      </OrderTable>
      <Scribble />
    </Page>
  );
}
